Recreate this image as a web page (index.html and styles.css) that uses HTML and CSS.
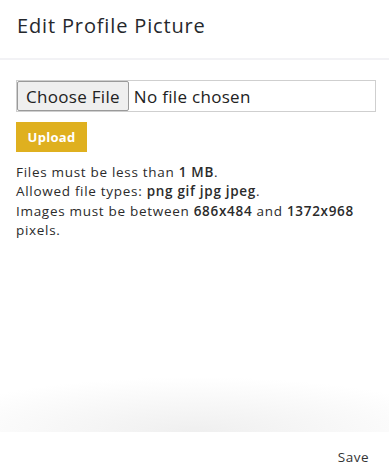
FILE: index.html
```html
<!DOCTYPE html>
<html lang="en">
<head>
    <meta charset="UTF-8">
    <meta name="viewport" content="width=device-width, initial-scale=1.0">
    <title>Edit Profile Picture</title>
    <link rel="stylesheet" href="styles.css">
</head>
<body>
    <div class="modal">
        <div class="modal-header">
            <h1>Edit Profile Picture</h1>
        </div>
        <div class="modal-body">
            <input type="file" class="file-input" id="picture" />
            <button class="btn-upload">Upload</button>
            <div class="help">
                Files must be less than <b>1 MB</b>.<br>
                Allowed file types: <b>png gif jpg jpeg</b>.<br>
                Images must be between <b>686x484</b> and <b>1372x968</b> pixels.
            </div>
            <div class="fade"></div>
        </div>
        <div class="modal-footer">
            <button class="btn-save">Save</button>
        </div>
    </div>
</body>
</html>
```

FILE: styles.css
```css
html, body {
    margin: 0;
    height: 100%;
}
body {
    font-family: "Open Sans", Arial, sans-serif;
    color: #333;
    background: white;
}
.modal {
    display: flex;
    flex-direction: column;
    height: 100%;
}
.modal-header {
    box-sizing: border-box;
    height: 60px;
    border-bottom: 2px solid #f2f2f5;
    padding: 12px 17px 0;
}
.modal-header h1 {
    margin: 0;
    font-size: 20px;
    line-height: 28px;
    font-weight: 400;
    color: #25282d;
    letter-spacing: 0.85px;
}
.modal-body {
    flex: 1;
    display: flex;
    flex-direction: column;
    align-items: flex-start;
    padding: 20px 13px 0 16px;
}
.file-input {
    box-sizing: border-box;
    width: 100%;
    height: 32px;
    border: 1px solid #cfcfcf;
    padding: 0;
    font-family: inherit;
    font-size: 17px;
    letter-spacing: 0.3px;
    color: #222;
}
.file-input::file-selector-button {
    height: 30px;
    margin: 0 5px 0 0;
    padding: 0 8px;
    border: 1px solid #9a9a9a;
    border-radius: 2px;
    background: #efefef;
    font-family: inherit;
    font-size: 17px;
    letter-spacing: 0.3px;
    color: #222;
}
.btn-upload {
    margin-top: 10px;
    width: 71px;
    height: 30px;
    border: none;
    background: #dfb01f;
    color: white;
    font-family: inherit;
    font-size: 13px;
    letter-spacing: 0.3px;
    font-weight: 700;
    padding: 0;
}
.help {
    margin-top: 11px;
    font-size: 13.5px;
    line-height: 19.3px;
    letter-spacing: 0.7px;
    color: #2b2b2b;
}
.help b {
    font-weight: 600;
}
.fade {
    margin-top: auto;
    align-self: stretch;
    margin-left: -16px;
    margin-right: -13px;
    height: 55px;
    background: radial-gradient(ellipse 70% 100% at 50% 100%, #efefef 0%, #f7f7f7 50%, #ffffff 100%);
}
.modal-footer {
    box-sizing: border-box;
    height: 36px;
    display: flex;
    justify-content: flex-end;
    align-items: flex-start;
    padding: 16px 20px 0 0;
}
.btn-save {
    border: none;
    background: none;
    padding: 0;
    font-family: inherit;
    font-size: 13.5px;
    letter-spacing: 0.5px;
    line-height: 18px;
    color: #333;
}
```
